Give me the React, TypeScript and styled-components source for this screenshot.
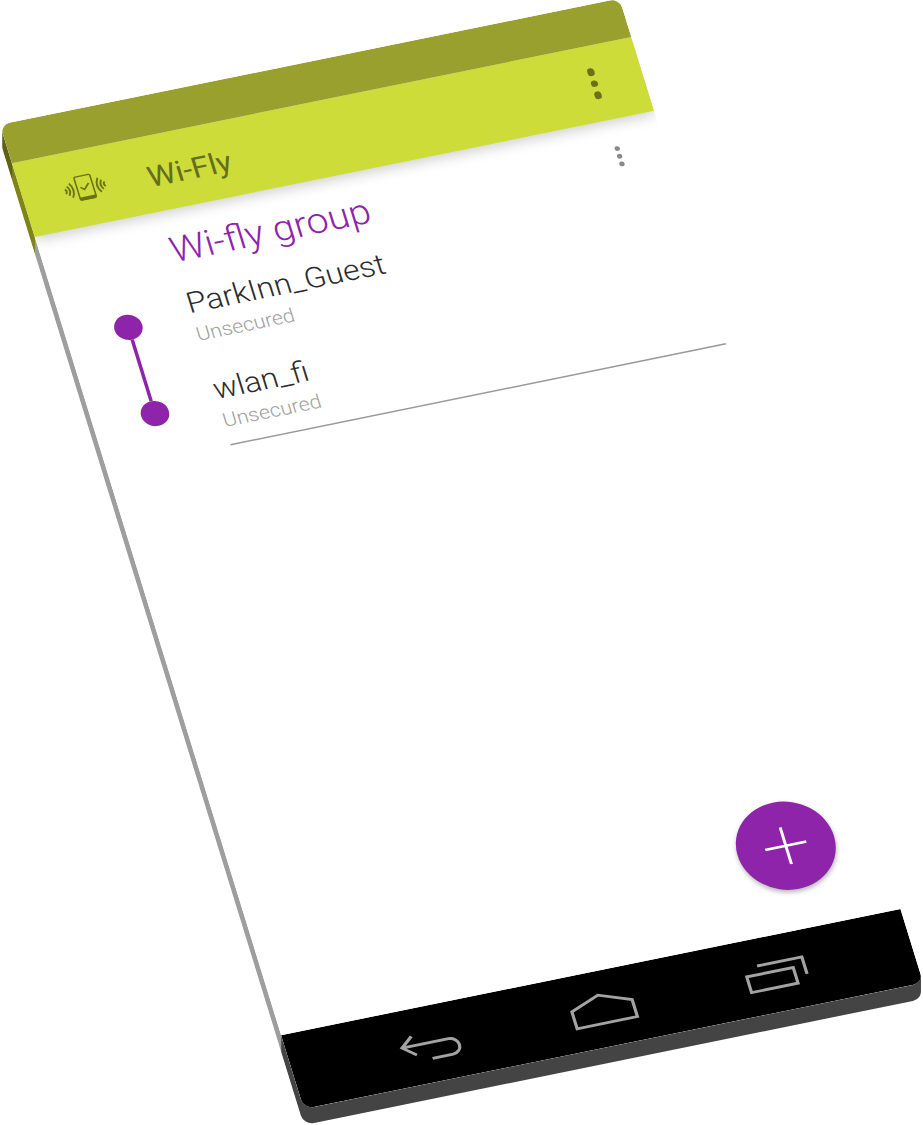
import React from "react";
import styled, { createGlobalStyle } from "styled-components";

const Global = createGlobalStyle`
  html, body { margin: 0; padding: 0; background: #fff; overflow: hidden; }
  #root { width: 923px; height: 1125px; overflow: hidden; }
`;

const Stage = styled.div`
  display: grid;
  width: 360px;
  height: 640px;
  font-family: Roboto, "Liberation Sans", sans-serif;
`;

/* The device's edge: each band is swept up toward the face along the
   16px screen-space depth of the extrusion, expressed in local coordinates.
   The sweep stops short of the face so that it cannot bleed past its right edge. */
const sweep = (color: string) =>
  Array.from({ length: 8 }, (_, i) => {
    const k = ((i + 1) / 8) * 0.88;
    return `${(2.7 * k).toFixed(2)}px ${(-9.79 * k).toFixed(2)}px 0 ${color}`;
  }).join(", ");

const Side = styled.div`
  grid-area: 1 / 1;
  width: 360px;
  height: 640px;
  display: flex;
  flex-direction: column;
  transform-origin: 0 0;
  transform: matrix(1.7206, -0.3505, 0.4747, 1.538, 0, 140.7);
`;

const SideBand = styled.div<{ $h: number; $c: string }>`
  height: ${(p) => p.$h}px;
  flex: none;
  background: ${(p) => p.$c};
  box-shadow: ${(p) => sweep(p.$c)};
  &:first-child {
    border-radius: 6px 6px 0 0;
  }
  &:last-child {
    border-radius: 0 0 6px 6px;
  }
`;

const Device = styled.div`
  grid-area: 1 / 1;
  width: 360px;
  height: 640px;
  display: flex;
  flex-direction: column;
  border-radius: 6px;
  overflow: hidden;
  background: #fff;
  transform-origin: 0 0;
  transform: matrix(1.7206, -0.3505, 0.4747, 1.538, 0, 124.7);
`;

const StatusBar = styled.div`
  height: 25px;
  flex: none;
  background: #9aa02d;
  position: relative;
  z-index: 2;
`;

const AppBar = styled.header`
  height: 48px;
  flex: none;
  display: flex;
  align-items: center;
  padding: 0 25.75px 0 24px;
  background: #cddc39;
  box-shadow: 0 2px 8px rgba(0, 0, 0, 0.2);
  position: relative;
  z-index: 1;
`;

const Logo = styled.svg`
  width: 24px;
  height: 24px;
  flex: none;
  color: #6c7117;
`;

const Title = styled.h1`
  margin: 0 0 0 24px;
  padding-top: 2.5px;
  font-size: 18px;
  font-weight: 400;
  color: #656d1e;
`;

const More = styled.div<{ $size: number; $gap: number; $color: string }>`
  margin-left: auto;
  display: flex;
  flex-direction: column;
  gap: ${(p) => p.$gap}px;
  flex: none;
  & > i {
    display: block;
    width: ${(p) => p.$size}px;
    height: ${(p) => p.$size}px;
    border-radius: 50%;
    background: ${(p) => p.$color};
  }
`;

const Content = styled.main`
  flex: 1;
  position: relative;
  background: #fff;
`;

const SubHeader = styled.div`
  height: 39px;
  box-sizing: border-box;
  padding: 12.5px 25.5px 0 72px;
  display: flex;
  align-items: flex-start;
`;

const SubTitle = styled.h2`
  margin: 0;
  font-size: 22.2px;
  line-height: 24px;
  font-weight: 300;
  color: #8e24aa;
`;

const SubMore = styled(More)`
  margin-top: 4.5px;
`;

const Group = styled.section`
  display: flex;
`;

const Rail = styled.div`
  width: 72px;
  flex: none;
  padding-top: 20px;
  display: flex;
  flex-direction: column;
  align-items: center;
`;

const Node = styled.span`
  width: 16px;
  height: 16px;
  border-radius: 50%;
  background: #8e24aa;
  flex: none;
`;

const Link = styled.span`
  width: 2.4px;
  height: 40px;
  background: #8e24aa;
  flex: none;
`;

const List = styled.div`
  flex: 1;
  border-bottom: 1px solid #9a9a9a;
`;

const Row = styled.div`
  height: 56px;
  box-sizing: border-box;
  padding-top: 11px;
  &:last-child {
    padding-top: 10.5px;
  }
`;

const Name = styled.div`
  font-size: 18.1px;
  line-height: 20px;
  font-weight: 300;
  color: #2b2b2b;
`;

const Sub = styled.div`
  margin-top: 2px;
  font-size: 12.1px;
  line-height: 16px;
  font-weight: 300;
  color: #a0a0a0;
`;

const Fab = styled.button`
  position: absolute;
  right: 24px;
  bottom: 25px;
  width: 56px;
  height: 56px;
  padding: 0;
  border: 0;
  border-radius: 50%;
  background: #8e24aa;
  box-shadow: 0 1.5px 3px rgba(0, 0, 0, 0.3);
  display: flex;
  align-items: center;
  justify-content: center;
`;

const NavBar = styled.nav`
  height: 48px;
  flex: none;
  background: #000;
  display: flex;
  justify-content: center;
  align-items: center;
  gap: 60px;
`;

const NavIcon = styled.svg`
  width: 40px;
  height: 32px;
  flex: none;
  fill: none;
  stroke: #a3a3a3;
  stroke-width: 1.8;
`;

const Wifi = () => (
  <Logo viewBox="0 0 24 24" fill="none" stroke="currentColor">
    <path d="M.5 10.7Q1.9 12.2.5 13.7M2 9.2Q4.2 12.2 2 15.2M3.7 7.6Q6.6 12.2 3.7 16.8" strokeWidth="1.05" />
    <path d="M23.5 10.7Q22.1 12.2 23.5 13.7M22 9.2Q19.8 12.2 22 15.2M20.3 7.6Q17.4 12.2 20.3 16.8" strokeWidth="1.05" />
    <rect x="7.4" y="4.4" width="9.2" height="14.8" rx=".8" strokeWidth=".9" />
    <path d="M7.2 17.6h9.6v1.3a.8.8 0 0 1-.8.8H8a.8.8 0 0 1-.8-.8z" fill="currentColor" stroke="none" />
    <path d="M9.4 11.4l1.9 1.8 3.3-3.6" strokeWidth="1" />
  </Logo>
);

const Dots = (p: { size: number; gap: number; color: string; as?: typeof More }) => {
  const C = p.as ?? More;
  return (
    <C $size={p.size} $gap={p.gap} $color={p.color}>
      <i />
      <i />
      <i />
    </C>
  );
};

const networks = ["ParkInn_Guest", "wlan_fi"];

export default function App() {
  return (
    <>
      <Global />
      <Stage>
        <Side>
          <SideBand $h={25} $c="#5f6214" />
          <SideBand $h={48} $c="#7f8416" />
          <SideBand $h={519} $c="#9e9e9e" />
          <SideBand $h={48} $c="#444444" />
        </Side>
        <Device>
          <StatusBar />
          <AppBar>
            <Wifi />
            <Title>Wi-Fly</Title>
            <Dots size={4.6} gap={3} color="#6c7117" />
          </AppBar>
          <Content>
            <SubHeader>
              <SubTitle>Wi-fly group</SubTitle>
              <Dots as={SubMore} size={3} gap={2.1} color="#8a8a8a" />
            </SubHeader>
            <Group>
              <Rail>
                <Node />
                <Link />
                <Node />
              </Rail>
              <List>
                {networks.map((n) => (
                  <Row key={n}>
                    <Name>{n}</Name>
                    <Sub>Unsecured</Sub>
                  </Row>
                ))}
              </List>
            </Group>
            <Fab aria-label="Add">
              <svg width="24" height="24" viewBox="0 0 24 24" stroke="#fff" strokeWidth="1.7">
                <path d="M12 0V24M0 12H24" />
              </svg>
            </Fab>
          </Content>
          <NavBar>
            <NavIcon viewBox="0 0 40 32">
              <path d="M11 9L4 15L11 21M4 15H31A5 5 0 0 1 31 25H19" />
            </NavIcon>
            <NavIcon viewBox="0 0 40 32">
              <path d="M3 14L20 7L38 14V25H3Z" />
            </NavIcon>
            <NavIcon viewBox="0 0 40 32">
              <rect x="4.5" y="14.4" width="27" height="10.2" />
              <path d="M12 9H38V20" />
            </NavIcon>
          </NavBar>
        </Device>
      </Stage>
    </>
  );
}
